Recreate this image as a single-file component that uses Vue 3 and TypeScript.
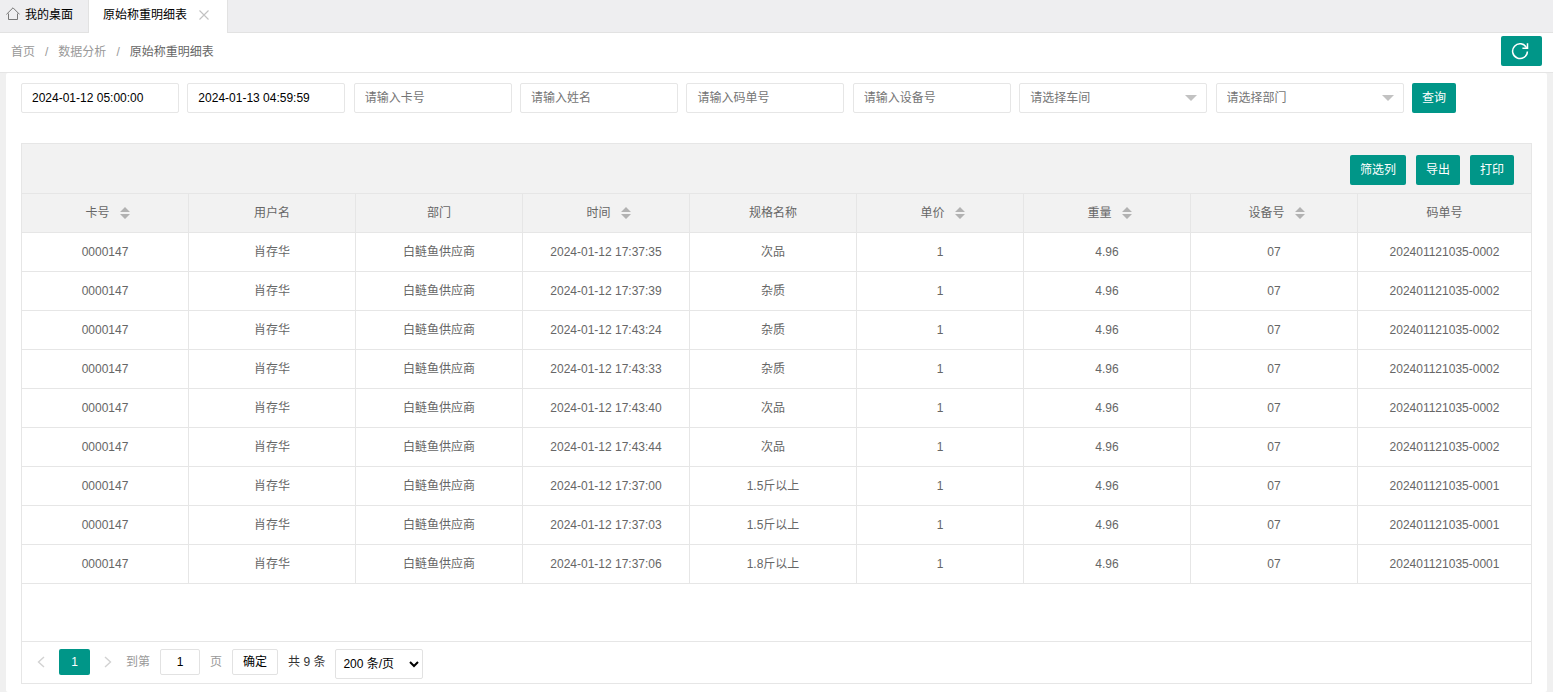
<script setup lang="ts">
import { ref } from 'vue'

interface Column {
  key: keyof Row
  title: string
  sortable?: boolean
}

interface Row {
  card: string
  user: string
  dept: string
  time: string
  spec: string
  price: string
  weight: string
  device: string
  code: string
}

const columns: Column[] = [
  { key: 'card', title: '卡号', sortable: true },
  { key: 'user', title: '用户名' },
  { key: 'dept', title: '部门' },
  { key: 'time', title: '时间', sortable: true },
  { key: 'spec', title: '规格名称' },
  { key: 'price', title: '单价', sortable: true },
  { key: 'weight', title: '重量', sortable: true },
  { key: 'device', title: '设备号', sortable: true },
  { key: 'code', title: '码单号' },
]

const records: [string, string, string][] = [
  ['17:37:35', '次品', '0002'],
  ['17:37:39', '杂质', '0002'],
  ['17:43:24', '杂质', '0002'],
  ['17:43:33', '杂质', '0002'],
  ['17:43:40', '次品', '0002'],
  ['17:43:44', '次品', '0002'],
  ['17:37:00', '1.5斤以上', '0001'],
  ['17:37:03', '1.5斤以上', '0001'],
  ['17:37:06', '1.8斤以上', '0001'],
]

const rows: Row[] = records.map(([time, spec, code]) => ({
  card: '0000147',
  user: '肖存华',
  dept: '白鲢鱼供应商',
  time: `2024-01-12 ${time}`,
  spec,
  price: '1',
  weight: '4.96',
  device: '07',
  code: `202401121035-${code}`,
}))

const start = ref('2024-01-12 05:00:00')
const end = ref('2024-01-13 04:59:59')
const textFilters = ['请输入卡号', '请输入姓名', '请输入码单号', '请输入设备号']
const selectFilters = ['请选择车间', '请选择部门']
const jumpPage = ref('1')
</script>

<template>
  <div class="page">
    <nav class="tabs">
      <button class="tab tab-home" type="button">
        <svg width="14" height="15" viewBox="0 0 14 15" fill="none" stroke="#777" aria-hidden="true">
          <path d="M0.4 7.4 L7 0.8 L13.6 7.4 M2.5 6.5 V12.5 H11.5 V6.5" />
        </svg>
        <span>我的桌面</span>
      </button>
      <div class="tab tab-active">
        <span>原始称重明细表</span>
        <button class="tab-close" type="button" aria-label="关闭">
          <svg width="10" height="10" viewBox="0 0 10 10" fill="none" stroke="#c2c2c2" stroke-width="1.1">
            <path d="M0.5 0.5 L9.5 9.5 M9.5 0.5 L0.5 9.5" />
          </svg>
        </button>
      </div>
    </nav>

    <header class="crumb-bar">
      <nav class="crumbs">
        <a href="#">首页</a><span>/</span><a href="#">数据分析</a><span>/</span><a href="#" class="current">原始称重明细表</a>
      </nav>
      <button class="btn refresh" type="button" aria-label="刷新">
        <svg width="18" height="18" viewBox="0 0 18 18" fill="none" stroke="#fff" stroke-width="1.5">
          <path d="M15.6 5.8 A7.4 7.4 0 1 0 16.4 9.4" />
          <path d="M16.5 1.2 V6.3 H11.4" />
        </svg>
      </button>
    </header>

    <main class="card">
      <form class="filters" @submit.prevent>
        <input v-model="start" class="field" type="text" aria-label="开始时间" />
        <input v-model="end" class="field" type="text" aria-label="结束时间" />
        <input v-for="t in textFilters" :key="t" class="field" type="text" :placeholder="t" :aria-label="t" />
        <div v-for="s in selectFilters" :key="s" class="select-box">
          <select class="field" :aria-label="s">
            <option>{{ s }}</option>
          </select>
          <svg class="caret" width="12" height="6" viewBox="0 0 12 6" aria-hidden="true">
            <path d="M0 0 H12 L6 6 Z" fill="#c2c2c2" />
          </svg>
        </div>
        <button class="btn" type="submit">查询</button>
      </form>

      <section class="grid">
        <div class="toolbar">
          <button class="btn" type="button">筛选列</button>
          <button class="btn" type="button">导出</button>
          <button class="btn" type="button">打印</button>
        </div>
        <table>
          <colgroup>
            <col v-for="c in columns" :key="c.key" :class="c.key" />
          </colgroup>
          <thead>
            <tr>
              <th v-for="c in columns" :key="c.key" scope="col">
                <span class="head">
                  {{ c.title }}
                  <svg v-if="c.sortable" class="sort" width="10" height="12" viewBox="0 0 10 12" aria-hidden="true">
                    <path d="M0 5 H10 L5 0 Z M0 7 H10 L5 12 Z" fill="#b2b2b2" />
                  </svg>
                </span>
              </th>
            </tr>
          </thead>
          <tbody>
            <tr v-for="(r, i) in rows" :key="i">
              <td v-for="c in columns" :key="c.key">{{ r[c.key] }}</td>
            </tr>
          </tbody>
        </table>
        <footer class="pager">
          <button class="arrow" type="button" aria-label="上一页">
            <svg width="8" height="12" viewBox="0 0 8 12" fill="none" stroke="#d2d2d2" stroke-width="1.4">
              <path d="M7 1 L1.5 6 L7 11" />
            </svg>
          </button>
          <button class="num" type="button">1</button>
          <button class="arrow" type="button" aria-label="下一页">
            <svg width="8" height="12" viewBox="0 0 8 12" fill="none" stroke="#d2d2d2" stroke-width="1.4">
              <path d="M1 1 L6.5 6 L1 11" />
            </svg>
          </button>
          <label class="jump">到第<input v-model="jumpPage" type="text" />页</label>
          <button class="confirm" type="button">确定</button>
          <span class="total">共 9 条</span>
          <select class="limit" aria-label="每页条数">
            <option>200 条/页</option>
          </select>
        </footer>
      </section>
    </main>
  </div>
</template>

<style>
body {
  margin: 0;
  background: #f0f0f0;
}
</style>

<style scoped>
.page {
  display: flex;
  flex-direction: column;
  min-height: 100vh;
  color: #666;
  font: 12px/20px "Liberation Sans", Arial, "Noto Sans CJK SC", sans-serif;
}
.page * {
  box-sizing: border-box;
}
button,
input,
select {
  margin: 0;
  padding: 0;
  font: inherit;
  color: #000;
}
button {
  border: 0;
  background: none;
  cursor: pointer;
}
a {
  color: #999;
  text-decoration: none;
}
svg {
  display: block;
  flex: none;
}
.tabs {
  display: flex;
  height: 33px;
  background: #eeeef0;
  box-shadow: inset 0 -1px #e2e2e2;
}
.tab {
  display: flex;
  align-items: center;
  padding-bottom: 4px;
  border-right: 1px solid #e2e2e2;
  color: #000;
}
.tab-home {
  gap: 5px;
  padding-left: 6px;
  padding-right: 15px;
}
.tab-active {
  gap: 12px;
  padding-left: 14px;
  padding-right: 18px;
  background: #fff;
}
.crumb-bar {
  display: flex;
  align-items: flex-start;
  justify-content: space-between;
  height: 40px;
  padding: 3px 11px 0;
  border-bottom: 1px solid #e5e5e5;
  background: #fff;
}
.crumbs {
  display: flex;
  gap: 10px;
  color: #999;
  line-height: 32px;
}
.crumbs .current {
  color: #666;
}
.btn {
  height: 30px;
  padding: 0 10px;
  border-radius: 2px;
  background: #009688;
  color: #fff;
  white-space: nowrap;
}
.refresh {
  display: flex;
  align-items: center;
  width: 41px;
}
.card {
  flex: 1;
  margin: 0 6px;
  padding: 10px 15px 8px;
  border-radius: 2px;
  background: #fff;
}
.filters {
  display: flex;
  justify-content: space-between;
  max-width: 1435px;
}
.field {
  width: 158px;
  height: 30px;
  padding: 0 10px;
  border: 1px solid #e6e6e6;
  border-radius: 2px;
  background: #fff;
}
.field::placeholder {
  color: #757575;
  opacity: 1;
}
.select-box {
  position: relative;
}
.select-box .field {
  width: 188px;
  appearance: none;
  color: #757575;
}
.caret {
  position: absolute;
  top: 12px;
  right: 10px;
  pointer-events: none;
}
.grid {
  margin-top: 30px;
  border: 1px solid #e6e6e6;
}
.toolbar {
  display: flex;
  justify-content: flex-end;
  gap: 10px;
  padding: 11px 17px 8px;
  border-bottom: 1px solid #e6e6e6;
  background: #f2f2f2;
}
table {
  width: 100%;
  table-layout: fixed;
  border-collapse: separate;
  border-spacing: 0;
}
col {
  width: 167px;
}
col.code {
  width: auto;
}
th,
td {
  height: 39px;
  padding: 0;
  border-right: 1px solid #e6e6e6;
  border-bottom: 1px solid #e6e6e6;
  font-weight: 400;
  text-align: center;
}
th {
  background: #f2f2f2;
}
th:last-child,
td:last-child {
  border-right: 0;
}
.head {
  display: inline-flex;
  align-items: center;
  vertical-align: middle;
}
.sort {
  margin-left: 10px;
  margin-right: -5px;
}
.pager {
  display: flex;
  align-items: flex-start;
  height: 42px;
  margin-top: 57px;
  padding: 7px 15px 0;
  border-top: 1px solid #e6e6e6;
  line-height: 26px;
}
.arrow {
  display: flex;
  align-items: center;
  height: 26px;
}
.num {
  width: 31px;
  height: 26px;
  margin: 0 14px;
  border-radius: 2px;
  background: #009688;
  color: #fff;
}
.jump {
  display: flex;
  gap: 10px;
  margin-left: 14px;
  color: #999;
}
.jump input {
  width: 40px;
  height: 26px;
  border: 1px solid #e2e2e2;
  border-radius: 2px;
  text-align: center;
}
.confirm {
  height: 26px;
  margin: 0 10px;
  padding: 0 10px;
  border: 1px solid #e2e2e2;
  border-radius: 2px;
  line-height: 24px;
}
.total {
  color: #333;
}
.limit {
  width: 88px;
  height: 30px;
  margin-left: 10px;
  padding: 0 3px;
  border: 1px solid #e2e2e2;
  border-radius: 2px;
  background: #fff;
}
</style>
